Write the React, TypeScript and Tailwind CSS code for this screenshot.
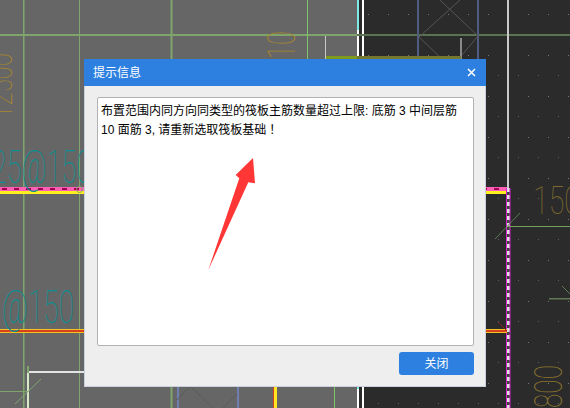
import React from "react";

const green = "#7fa56c";
const amber = "#a8862c";
const teal = "#0b8f92";

function Canvas() {
  const digit = { fontFamily: "Roboto, sans-serif", fontWeight: 100 } as const;
  return (
    <svg className="absolute inset-0" width={570} height={408} viewBox="0 0 570 408">
      <defs>
        <pattern id="dots" x="8" y="14" width="20" height="41" patternUnits="userSpaceOnUse">
          <rect x="0" y="0" width="1" height="1" fill="#777777" />
          <rect x="10" y="20" width="1" height="1" fill="#5e5e5e" />
        </pattern>
        <pattern id="vdash" x="0" y="188" width="4" height="7" patternUnits="userSpaceOnUse">
          <rect width="4" height="4" fill="#e0e0e0" />
          <rect y="4" width="4" height="3" fill="#3d4a3a" />
        </pattern>
        <pattern id="hdash" x="0" y="187" width="12" height="4" patternUnits="userSpaceOnUse">
          <rect width="12" height="4" fill="#ff5fb4" />
          <rect x="2" y="1" width="5" height="2" fill="#a3004f" />
        </pattern>
      </defs>
      <rect x="0" y="0" width="570" height="408" fill="#666666" />
      <rect x="357" y="0" width="213" height="408" fill="#2b2b2b" />
      <rect x="357" y="0" width="213" height="408" fill="url(#dots)" />
      <rect x="357" y="0" width="2" height="408" fill="#ffffff" />
      <rect x="357" y="0" width="2" height="30" fill="#7fe9e6" />
      <rect x="357" y="56" width="2" height="3" fill="#7fe9e6" />
      <rect x="357" y="386" width="2" height="3" fill="#7fe9e6" />
      <rect x="362" y="0" width="2" height="408" fill="#ffffff" />

      {/* grid lines */}
      <rect x="23" y="0" width="1.5" height="408" fill={green} />
      <rect x="79" y="0" width="1" height="408" fill={green} />
      <rect x="170.5" y="0" width="2" height="408" fill={green} />
      <rect x="0" y="34" width="357" height="2" fill={green} />
      <rect x="357" y="34" width="213" height="2" fill="#5b7350" />
      <rect x="307" y="0" width="1" height="60" fill="#7fc56a" />
      <rect x="334" y="386" width="1" height="22" fill="#7fc56a" />

      {/* blue lines and crosses */}
      <rect x="417" y="0" width="2" height="60" fill="#4f5c80" />
      <rect x="477" y="0" width="2" height="60" fill="#4f5c80" />
      <path d="M440 0 L478 36 L462 55 M460 0 L419 37 L442 59" stroke="#555" fill="none" />
      <rect x="177" y="386" width="2" height="22" fill="#6f80b0" />
      <rect x="237" y="386" width="2" height="22" fill="#6f80b0" />
      <path d="M190 386 L177 400 M191 387 L213 408 M237 394 L223 408" stroke="#5a5a5a" fill="none" />
      <rect x="274" y="386" width="3" height="22" fill="#ffe620" />
      <rect x="273" y="386" width="1" height="22" fill="#d04020" />

      <rect x="325" y="36" width="1" height="24" fill="#c8c8c8" />
      <rect x="460" y="38" width="2" height="22" fill="#8a8a8a" />
      <rect x="326" y="56" width="135" height="3" fill="#76782f" />
      <rect x="326" y="56" width="31" height="3" fill="#7f9a1c" />
      <rect x="507" y="0" width="2" height="188" fill="#c9c9c9" />

      {/* beams */}
      <rect x="0" y="187" width="84" height="4" fill="url(#hdash)" />
      <rect x="0" y="191" width="84" height="3" fill="#ffee20" />
      <rect x="486" y="187" width="21" height="4" fill="url(#hdash)" />
      <rect x="486" y="191" width="21" height="3" fill="#ffee20" />
      <circle cx="79.5" cy="189.5" r="3" fill="none" stroke={green} />
      <rect x="507" y="188" width="3" height="220" fill="url(#vdash)" />
      <rect x="506" y="188" width="1" height="220" fill="#d81fd0" />
      <rect x="509.5" y="188" width="1" height="220" fill="#d81fd0" />
      <rect x="0" y="329" width="84" height="4" fill="#f2c31c" />
      <rect x="0" y="330" width="84" height="2" fill="#d8401e" />
      <rect x="486" y="329" width="21" height="4" fill="#f2c31c" />
      <rect x="486" y="330" width="21" height="2" fill="#d8401e" />
      <path d="M498 322 L507 331" stroke="#8e1f1f" />

      {/* right side leaders */}
      <path d="M495 239 L520 213" stroke="#5f7a55" />
      <rect x="508" y="226" width="62" height="1" fill="#6fa35c" />
      <path d="M562 286 L572 296" stroke="#5f7a55" />
      <rect x="549" y="298" width="21" height="1.5" fill="#5f7a55" />

      {/* bottom left */}
      <rect x="28" y="371" width="56" height="2" fill="#e4e4e4" />
      <rect x="27" y="366" width="2" height="7" fill={green} />
      <rect x="27" y="373" width="2" height="35" fill="#d6e8c8" />
      <rect x="0" y="391" width="28" height="1" fill={green} />
      <path d="M15 404 L41 379" stroke={green} />

      {/* annotations */}
      <g style={digit}>
        <text transform="translate(12 119)rotate(-90)" textLength={66} lengthAdjust="spacingAndGlyphs" fontSize={34} fill={amber}>12500</text>
        <text transform="translate(295 73)rotate(-90)" fontSize={38} textLength={42} lengthAdjust="spacingAndGlyphs" fill={amber}>010</text>
        <text x={-8} y={183} fontSize={46} textLength={99} lengthAdjust="spacingAndGlyphs" fill={teal}>25@150</text>
        <text x={2} y={323} fontSize={46} textLength={72} lengthAdjust="spacingAndGlyphs" fill={teal}>@150</text>
        <text x={533} y={214} fontSize={38} textLength={47} lengthAdjust="spacingAndGlyphs" fill="#7c6a30">150</text>
        <text transform="translate(562 408)rotate(-90)" fontSize={38} textLength={43} lengthAdjust="spacingAndGlyphs" fill="#8a7430">800</text>
      </g>
    </svg>
  );
}

export default function App() {
  return (
    <div className="relative w-[570px] h-[408px] overflow-hidden bg-[#666666] font-['Liberation_Sans','Noto_Sans_CJK_SC',sans-serif] text-[12px]">
      <Canvas />
      <div className="absolute left-[84px] top-[59px] w-[402px] h-[328px] flex flex-col bg-[#eeeeee] border-r border-b border-l border-[#c9d0dc]">
        <div className="h-[27px] -mx-px flex items-center justify-between bg-[#2d7fe0] pl-[9px] pr-[10px] text-white">
          <span className="text-[12px] leading-none">提示信息</span>
          <svg width="9" height="9" viewBox="0 0 9 9">
            <path d="M1 1 L8 8 M8 1 L1 8" stroke="#ffffff" strokeWidth="1.5" fill="none" />
          </svg>
        </div>
        <div className="flex-1 flex flex-col pl-[12px] pr-[11px] pt-[11px] pb-[11px] gap-[6px]">
          <div className="h-[249px] bg-white border border-[#b2b2b2] rounded-[2px] px-[3px] pt-[5px] text-black leading-[17px]">
            布置范围内同方向同类型的筏板主筋数量超过上限: 底筋 3 中间层筋 10 面筋 3, 请重新选取筏板基础<span className="font-['Noto_Sans_CJK_JP',sans-serif]">！</span>
          </div>
          <div className="flex justify-end">
            <button className="w-[75px] h-[23px] bg-[#2d7fe0] rounded-[3px] text-white text-[12px] leading-none">关闭</button>
          </div>
        </div>
      </div>
      <svg className="absolute inset-0 pointer-events-none" width={570} height={408} viewBox="0 0 570 408">
        <polygon points="253,158 235.7,175 239.3,178.3 208.3,270 248.3,182.3 255,183.3" fill="#ff3636" />
      </svg>
    </div>
  );
}
